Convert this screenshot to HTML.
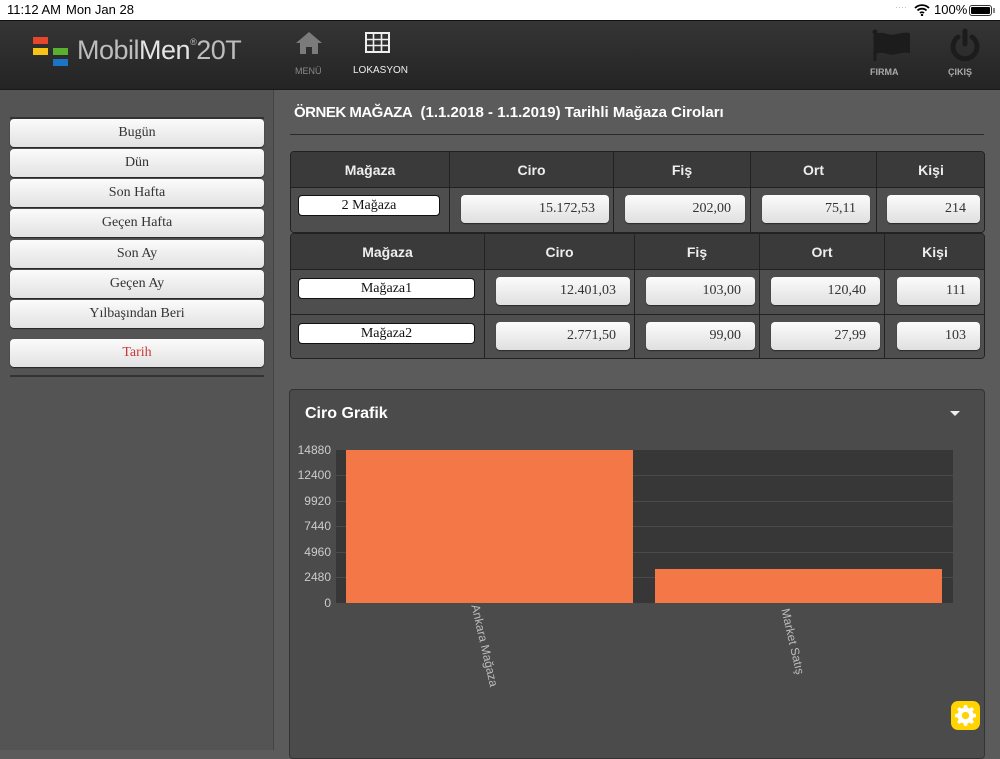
<!DOCTYPE html>
<html><head><meta charset="utf-8">
<style>
*{margin:0;padding:0;box-sizing:border-box}
body{width:1000px;height:750px;overflow:hidden;position:relative;background:#5c5b5b;font-family:"Liberation Sans",sans-serif}
.a{position:absolute}
.sb{background:#fff;height:20px;top:0;left:0;width:1000px;font-size:13px;color:#000}
.hdr{top:20px;left:0;width:1000px;height:70px;background:linear-gradient(#353535,#242424);border-top:1px solid #111;border-bottom:1px solid #1a1a1a}
.side{top:90px;left:0;width:274px;height:660px;background:#555454;border-right:1px solid #444}
.btn{left:10px;width:254px;height:28px;border-radius:4px;background:linear-gradient(#fbfbfb,#e2e2e2);font-family:"Liberation Serif",serif;font-size:14px;color:#333;text-align:center;line-height:28px;box-shadow:0 1px 1px #222}
.cell{border-right:1px solid #222;border-bottom:1px solid #222}
.hc{background:#3b3a3a;color:#eee;font-weight:bold;font-size:14px;text-align:center;line-height:36px}
.dc{background:#4f4e4e}
.vb{border-radius:4px;background:linear-gradient(#fcfcfc,#e0e0e0);font-family:"Liberation Serif",serif;font-size:14px;color:#333;text-align:right;padding-right:14px;line-height:28px;height:28px;box-shadow:0 1px 1px #2a2a2a}
.nb{background:#fff;border:1px solid #111;border-radius:4px;font-family:"Liberation Serif",serif;font-size:14px;color:#111;text-align:center;height:21px;line-height:19px}
.yl{width:40px;text-align:right;font-size:12px;color:#ccc;left:291px}
.gl{left:336px;width:617px;height:1px;background:#4a4a4a}
</style></head><body>
<div class="a sb"><span class="a" style="left:7px;top:2px">11:12 AM</span><span class="a" style="left:66px;top:2px">Mon Jan 28</span>
<span class="a" style="left:895px;top:2px;color:#bbb;font-size:9px">····</span>
<svg class="a" style="left:914px;top:4px" width="16" height="12" viewBox="0 0 16 12"><path d="M1 4a10 10 0 0 1 14 0M3.5 6.5a6.5 6.5 0 0 1 9 0M6 9a3 3 0 0 1 4 0" stroke="#000" stroke-width="1.8" fill="none"/><circle cx="8" cy="11" r="1.2"/></svg>
<span class="a" style="left:934px;top:2px">100%</span>
<div class="a" style="left:969px;top:5px;width:23px;height:11px;border:1px solid #333;border-radius:3px;padding:1px"><div style="background:#000;width:100%;height:100%;border-radius:1px"></div></div>
<div class="a" style="left:993px;top:8px;width:2px;height:5px;background:#888"></div></div>
<div class="a hdr">
<div class="a" style="left:33px;top:16px;width:15px;height:7px;background:#e8462b"></div>
<div class="a" style="left:33px;top:27px;width:15px;height:7px;background:#f7c314"></div>
<div class="a" style="left:53px;top:27px;width:15px;height:7px;background:#5ab130"></div>
<div class="a" style="left:53px;top:38px;width:15px;height:7px;background:#1a74c8"></div>
<div class="a" style="left:77px;top:14px;font-size:27px;color:#bdbdbd;letter-spacing:-0.5px">Mobil<span style="color:#e4e4e4">Men</span><sup style="font-size:9px;vertical-align:14px">®</sup>20T</div>
<svg class="a" style="left:295px;top:10px" width="28" height="24" viewBox="0 0 28 24"><path d="M14 1 1 12h4v11h6v-7h6v7h6V12h4z" fill="#7b7b7b"/></svg>
<div class="a" style="left:295px;top:45px;font-size:9px;color:#8a8a8a">MENÜ</div>
<svg class="a" style="left:365px;top:11px" width="25" height="21" viewBox="0 0 25 21"><rect x="1" y="1" width="23" height="19" fill="none" stroke="#eee" stroke-width="2"/><path d="M1 7.5h23M1 13.5h23M8.5 1v19M16.5 1v19" stroke="#eee" stroke-width="1.6"/></svg>
<div class="a" style="left:353px;top:44px;font-size:10px;color:#eee">LOKASYON</div>
<svg class="a" style="left:871px;top:8px" width="40" height="32" viewBox="0 0 40 32"><circle cx="4" cy="3" r="2.5" fill="#1c1c1c"/><rect x="2.5" y="3" width="3" height="29" fill="#1c1c1c"/><path d="M5 5c8-4 12 3 21 0 4-1 8-2 13-1v20c-5-1-9 0-13 1-9 3-13-4-21 0z" fill="#1c1c1c"/></svg>
<div class="a" style="left:870px;top:46px;font-size:9px;font-weight:bold;color:#aaa">FIRMA</div>
<svg class="a" style="left:948px;top:7px" width="34" height="34" viewBox="0 0 34 34"><path d="M10 9a12 12 0 1 0 14 0" stroke="#1c1c1c" stroke-width="5" fill="none" stroke-linecap="round"/><path d="M17 3v13" stroke="#1c1c1c" stroke-width="5" stroke-linecap="round"/></svg>
<div class="a" style="left:948px;top:46px;font-size:9px;font-weight:bold;color:#aaa">ÇIKIŞ</div>
</div>
<div class="a side"></div>
<div class="a" style="left:10px;top:117px;width:254px;height:2px;background:#333"></div>
<div class="a btn" style="top:119px">Bugün</div>
<div class="a btn" style="top:149px">Dün</div>
<div class="a btn" style="top:179px">Son Hafta</div>
<div class="a btn" style="top:209px">Geçen Hafta</div>
<div class="a btn" style="top:240px">Son Ay</div>
<div class="a btn" style="top:270px">Geçen Ay</div>
<div class="a btn" style="top:300px">Yılbaşından Beri</div>
<div class="a btn" style="top:339px;color:#c83a3a">Tarih</div>
<div class="a" style="left:10px;top:375px;width:254px;height:2px;background:#333"></div>

<div class="a" style="left:294px;top:104px;font-size:15px;font-weight:bold;color:#fff"><span style="letter-spacing:-0.5px">ÖRNEK MAĞAZA</span>&nbsp; (1.1.2018 - 1.1.2019) Tarihli Mağaza Ciroları</div>
<div class="a" style="left:290px;top:134px;width:694px;height:1px;background:#2a2a2a"></div>

<div class="a" style="left:290px;top:151px;width:695px;height:82px;border:1px solid #222;border-radius:4px;overflow:hidden">
<div class="a cell hc" style="left:0;top:0;width:159px;height:36px">Mağaza</div>
<div class="a cell hc" style="left:159px;top:0;width:164px;height:36px">Ciro</div>
<div class="a cell hc" style="left:323px;top:0;width:137px;height:36px">Fiş</div>
<div class="a cell hc" style="left:460px;top:0;width:126px;height:36px">Ort</div>
<div class="a hc" style="left:586px;top:0;width:108px;height:36px;border-bottom:1px solid #222">Kişi</div>
<div class="a cell dc" style="left:0;top:36px;width:159px;height:46px"></div>
<div class="a cell dc" style="left:159px;top:36px;width:164px;height:46px"></div>
<div class="a cell dc" style="left:323px;top:36px;width:137px;height:46px"></div>
<div class="a cell dc" style="left:460px;top:36px;width:126px;height:46px"></div>
<div class="a dc" style="left:586px;top:36px;width:108px;height:46px"></div>
</div>
<div class="a nb" style="left:298px;top:195px;width:142px">2 Mağaza</div>
<div class="a vb" style="left:461px;top:195px;width:148px">15.172,53</div>
<div class="a vb" style="left:625px;top:195px;width:120px">202,00</div>
<div class="a vb" style="left:762px;top:195px;width:108px">75,11</div>
<div class="a vb" style="left:887px;top:195px;width:93px">214</div>

<div class="a" style="left:290px;top:233px;width:695px;height:126px;border:1px solid #222;border-radius:4px;overflow:hidden">
<div class="a cell hc" style="left:0;top:0;width:194px;height:36px">Mağaza</div>
<div class="a cell hc" style="left:194px;top:0;width:150px;height:36px">Ciro</div>
<div class="a cell hc" style="left:344px;top:0;width:125px;height:36px">Fiş</div>
<div class="a cell hc" style="left:469px;top:0;width:125px;height:36px">Ort</div>
<div class="a hc" style="left:594px;top:0;width:100px;height:36px;border-bottom:1px solid #222">Kişi</div>
<div class="a cell dc" style="left:0;top:36px;width:194px;height:45px"></div>
<div class="a cell dc" style="left:194px;top:36px;width:150px;height:45px"></div>
<div class="a cell dc" style="left:344px;top:36px;width:125px;height:45px"></div>
<div class="a cell dc" style="left:469px;top:36px;width:125px;height:45px"></div>
<div class="a dc" style="left:594px;top:36px;width:100px;height:45px;border-bottom:1px solid #222"></div>
<div class="a dc" style="left:0;top:81px;width:194px;height:45px;border-right:1px solid #222"></div>
<div class="a dc" style="left:194px;top:81px;width:150px;height:45px;border-right:1px solid #222"></div>
<div class="a dc" style="left:344px;top:81px;width:125px;height:45px;border-right:1px solid #222"></div>
<div class="a dc" style="left:469px;top:81px;width:125px;height:45px;border-right:1px solid #222"></div>
<div class="a dc" style="left:594px;top:81px;width:100px;height:45px"></div>
</div>
<div class="a nb" style="left:298px;top:278px;width:177px">Mağaza1</div>
<div class="a vb" style="left:496px;top:277px;width:134px">12.401,03</div>
<div class="a vb" style="left:646px;top:277px;width:109px">103,00</div>
<div class="a vb" style="left:771px;top:277px;width:109px">120,40</div>
<div class="a vb" style="left:897px;top:277px;width:83px">111</div>
<div class="a nb" style="left:298px;top:323px;width:177px">Mağaza2</div>
<div class="a vb" style="left:496px;top:322px;width:134px">2.771,50</div>
<div class="a vb" style="left:646px;top:322px;width:109px">99,00</div>
<div class="a vb" style="left:771px;top:322px;width:109px">27,99</div>
<div class="a vb" style="left:897px;top:322px;width:83px">103</div>

<div class="a" style="left:289px;top:389px;width:696px;height:370px;background:#4c4b4b;border:1px solid #333;border-radius:4px"></div>
<div class="a" style="left:305px;top:405px;font-size:16px;font-weight:bold;color:#fff">Ciro Grafik</div>
<div class="a" style="left:950px;top:411px;width:0;height:0;border-left:5px solid transparent;border-right:5px solid transparent;border-top:5px solid #eee"></div>
<div class="a" style="left:336px;top:450px;width:617px;height:153px;background:#383737"></div>
<div class="a gl" style="top:475px"></div><div class="a gl" style="top:501px"></div><div class="a gl" style="top:526px"></div><div class="a gl" style="top:552px"></div><div class="a gl" style="top:577px"></div>
<div class="a" style="left:346px;top:450px;width:287px;height:153px;background:#f37747"></div>
<div class="a" style="left:655px;top:569px;width:287px;height:34px;background:#f37747"></div>
<div class="a yl" style="top:443px">14880</div>
<div class="a yl" style="top:468px">12400</div>
<div class="a yl" style="top:494px">9920</div>
<div class="a yl" style="top:519px">7440</div>
<div class="a yl" style="top:545px">4960</div>
<div class="a yl" style="top:570px">2480</div>
<div class="a yl" style="top:596px">0</div>
<div class="a" style="left:482px;top:603px;font-size:12px;color:#bbb;transform-origin:0 0;transform:rotate(77deg);white-space:nowrap">Ankara Mağaza</div>
<div class="a" style="left:792px;top:607px;font-size:12px;color:#bbb;transform-origin:0 0;transform:rotate(77deg);white-space:nowrap">Market Satış</div>
<div class="a" style="left:951px;top:701px;width:29px;height:29px;background:#ffd400;border-radius:7px"></div>
<svg class="a" style="left:953px;top:703px" width="25" height="25" viewBox="0 0 24 24"><path d="M10.5 2h3l.5 2.6 1.9.8 2.2-1.5 2.1 2.1-1.5 2.2.8 1.9 2.5.4v3l-2.5.5-.8 1.9 1.5 2.2-2.1 2.1-2.2-1.5-1.9.8-.5 2.5h-3l-.4-2.5-1.9-.8-2.2 1.5-2.1-2.1 1.5-2.2-.8-1.9L2 13.5v-3l2.6-.4.8-1.9-1.5-2.2 2.1-2.1 2.2 1.5 1.9-.8z" fill="#fff"/><circle cx="12" cy="12" r="3.5" fill="#ffd400"/></svg>
</body></html>
